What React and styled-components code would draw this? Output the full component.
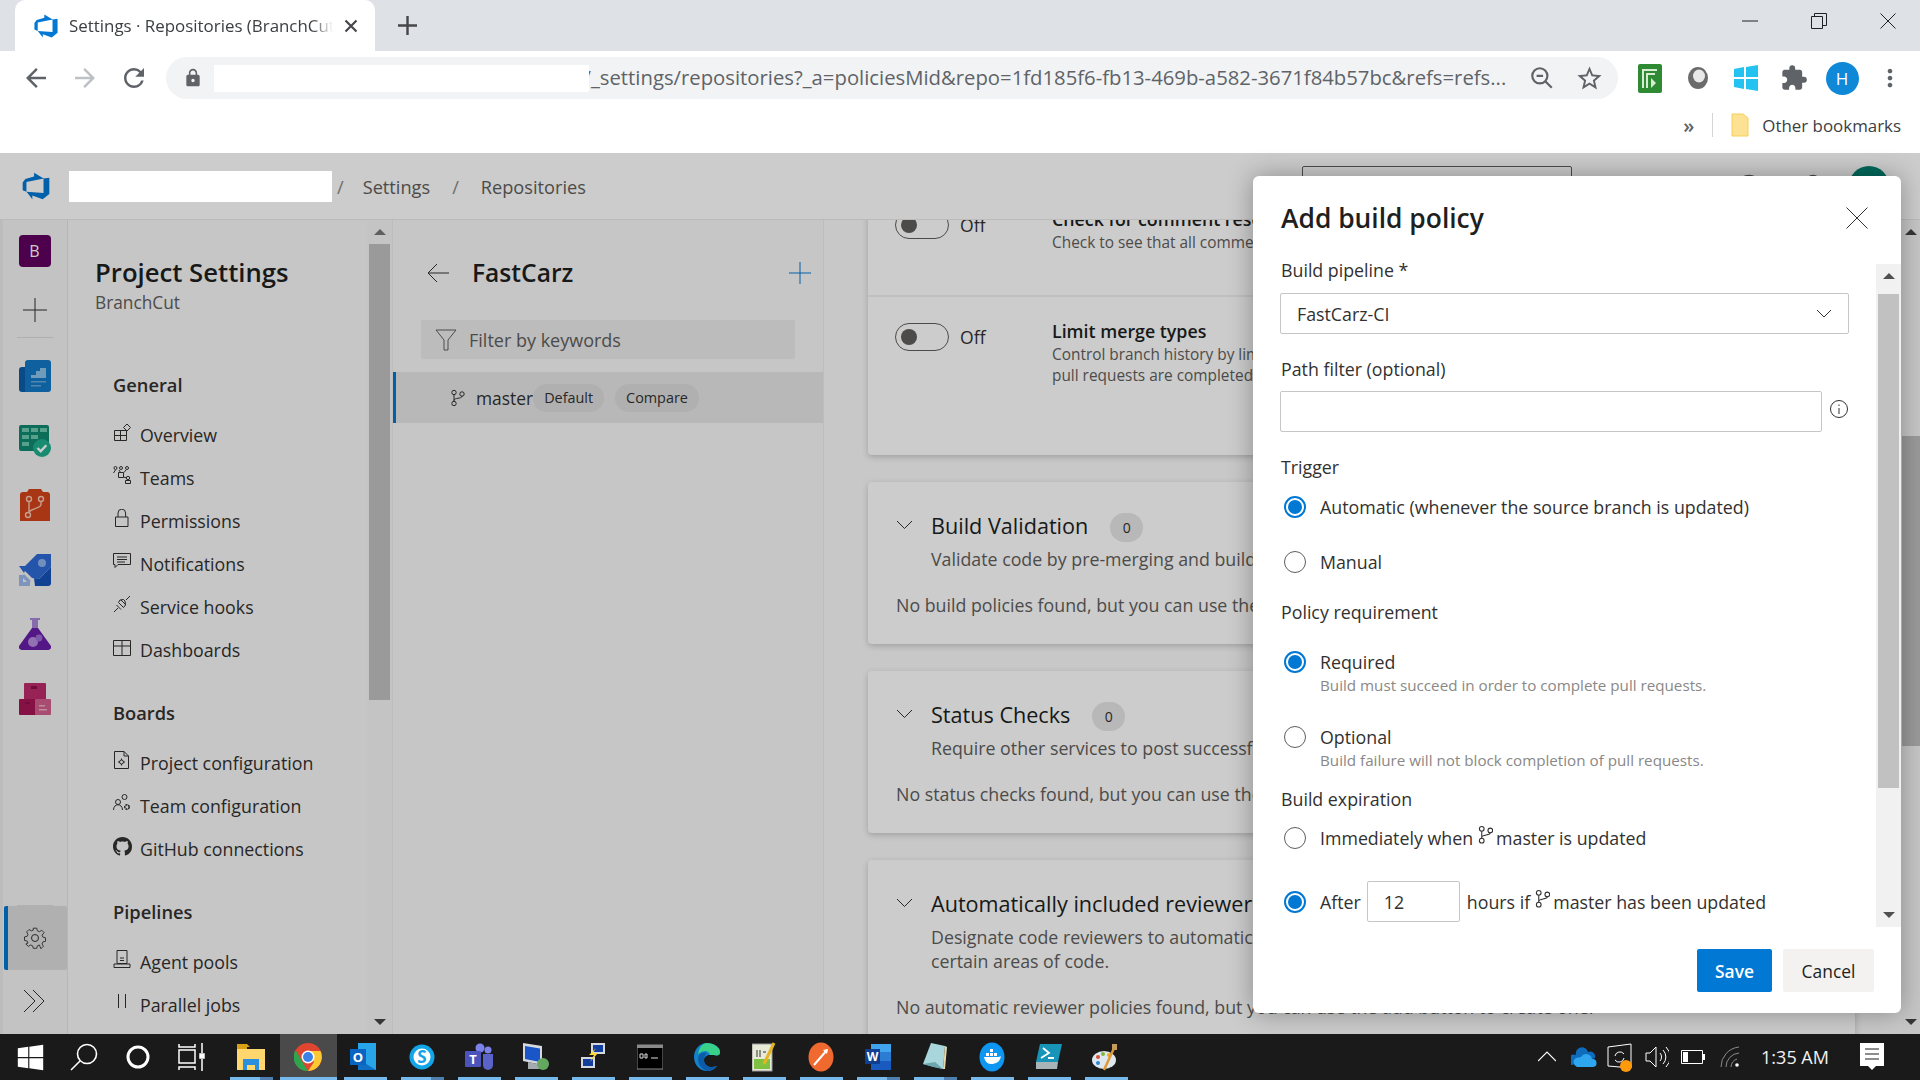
import styled, { createGlobalStyle } from "styled-components";
import { BsGithub } from "react-icons/bs";
import {
  MdArrowBack,
  MdArrowForward,
  MdExtension,
  MdLock,
  MdMoreVert,
  MdRefresh,
  MdStarBorder,
} from "react-icons/md";
import { FaWindows } from "react-icons/fa";

const GlobalStyle = createGlobalStyle`
  html, body { margin: 0; padding: 0; background: #fff; overflow: hidden; }
  * { box-sizing: border-box; }
  body { font-family: "Open Sans", "Liberation Sans", sans-serif; color: #201f1e; }
`;

const Page = styled.div`
  width: 1920px;
  height: 1080px;
  display: flex;
  flex-direction: column;
  overflow: hidden;
`;

/* browser chrome */
const TabStrip = styled.div`
  height: 51px;
  flex: none;
  background: #dee1e6;
  display: flex;
  align-items: center;
  padding-left: 15px;
`;

const Tab = styled.div`
  width: 360px;
  height: 51px;
  background: #fff;
  border-radius: 10px 10px 0 0;
  display: flex;
  align-items: center;
  padding-left: 18px;
  font-size: 16.9px;
  color: #3c4043;
`;

const TabTitle = styled.span`
  width: 264px;
  margin-left: 10px;
  white-space: nowrap;
  overflow: hidden;
  -webkit-mask-image: linear-gradient(to right, #000 92%, transparent);
  mask-image: linear-gradient(to right, #000 92%, transparent);
`;

const TabClose = styled.svg`
  margin-left: 11px;
  flex: none;
`;

const NewTab = styled.svg`
  margin-left: 23px;
`;

const WindowControls = styled.div`
  margin-left: auto;
  display: flex;
  align-items: center;
  height: 41px;
  align-self: flex-start;
  padding-right: 24px;
  gap: 53px;
  color: #202124;
`;

const Toolbar = styled.div`
  height: 59px;
  flex: none;
  background: #fff;
  display: flex;
  align-items: center;
  padding: 0 0 5px 21px;
  color: #5f6368;
`;

const NavButton = styled.div`
  width: 49px;
  display: flex;
  color: ${(p) => (p.$off ? "#bdc1c6" : "#5f6368")};
  font-size: 30px;
`;

const AddressBar = styled.div`
  width: 1452px;
  height: 42px;
  flex: none;
  margin-left: -2px;
  background: #f1f3f4;
  border-radius: 21px;
  display: flex;
  align-items: center;
  padding-left: 17px;
`;

const Blank = styled.div`
  width: ${(p) => p.$w}px;
  height: ${(p) => p.$h}px;
  margin-left: ${(p) => p.$ml}px;
  background: #fff;
  flex: none;
  position: relative;
  z-index: 2;
`;

const UrlText = styled.span`
  width: 923.5px;
  flex: none;
  font-size: 20.3px;
  line-height: 28px;
  margin: -2px 0 0 -5.5px;
  white-space: nowrap;
  overflow: hidden;
  color: #5f6368;
`;

const BarAction = styled.div`
  display: flex;
  font-size: 29px;
  color: #5f6368;
  margin-left: ${(p) => p.$gap}px;
`;

const Extensions = styled.div`
  display: flex;
  align-items: center;
  flex: none;
  margin-left: 8px;
`;

const ExtSlot = styled.div`
  width: 48px;
  display: flex;
  justify-content: center;
  font-size: 28px;
  color: #5f6368;
`;

const Profile = styled.div`
  width: 33px;
  height: 33px;
  border-radius: 50%;
  background: #0f88d8;
  color: #fff;
  display: flex;
  align-items: center;
  justify-content: center;
  font-size: 17px;
`;

const Bookmarks = styled.div`
  height: 43px;
  flex: none;
  background: #fff;
  display: flex;
  align-items: center;
  justify-content: flex-end;
  padding: 0 19px 13px 0;
  font-size: 16.9px;
  color: #3c4043;
`;

const More = styled.span`
  font-size: 20px;
  font-weight: 600;
  color: #5f6368;
`;

const BookmarkSep = styled.div`
  width: 1px;
  height: 24px;
  background: #d5d5d5;
  margin: 0 18px 0 18px;
`;

const BookmarkName = styled.span`
  margin-left: 13px;
  white-space: nowrap;
`;

/* azure devops */
const App = styled.div`
  position: relative;
  flex: 1;
  min-height: 0;
  display: flex;
  flex-direction: column;
  background: #fff;
`;

const Scrim = styled.div`
  position: absolute;
  inset: 0;
  background: rgba(0, 0, 0, 0.2);
  z-index: 1;
`;

const Header = styled.header`
  height: 67px;
  flex: none;
  display: flex;
  align-items: center;
  padding-left: 21px;
  border-bottom: 1px solid #eaeaea;
  background: #fff;
  font-size: 18.2px;
  color: #605e5c;
`;

const Crumb = styled.span`
  margin: 2px 0 0 ${(p) => p.$gap}px;
  color: ${(p) => (p.$sep ? "#8a8886" : "#605e5c")};
`;

const SearchBox = styled.div`
  width: 270px;
  height: 40px;
  margin-left: 716px;
  border: 1px solid #605e5c;
  border-radius: 2px;
`;

const HeadIcon = styled.div`
  width: 64px;
  display: flex;
  justify-content: center;
  color: #605e5c;
  ${SearchBox} + & {
    margin-left: 81px;
  }
`;

const Avatar = styled.div`
  width: 40px;
  height: 40px;
  border-radius: 50%;
  background: #008272;
  margin-left: 4px;
`;

const Body = styled.div`
  flex: 1;
  min-height: 0;
  display: flex;
`;

const Rail = styled.nav`
  width: 68px;
  flex: none;
  background: #f4f4f4;
  border-right: 1px solid #e4e4e4;
  border-left: 3px solid #ececec;
  display: flex;
  flex-direction: column;
  align-items: center;
  padding-top: 15px;
`;

const ProjectTile = styled.div`
  width: 32px;
  height: 32px;
  border-radius: 4px;
  background: #610060;
  color: #fff;
  display: flex;
  align-items: center;
  justify-content: center;
  font-size: 16px;
  margin-left: -1px;
`;

const RailPlus = styled.svg`
  margin-top: 31px;
  margin-left: -1px;
`;

const RailSep = styled.div`
  width: 37px;
  height: 1px;
  background: #dcdcdc;
  flex: none;
  margin-top: ${(p) => p.$mt};
  margin-bottom: ${(p) => p.$mb}px;
`;

const RailItem = styled.div`
  height: 64.5px;
  width: 100%;
  flex: none;
  display: flex;
  align-items: center;
  justify-content: center;
  padding-right: 1px;
`;

const RailActive = styled.div`
  width: 63px;
  height: 64px;
  flex: none;
  background: #dcdcdc;
  border-left: 4px solid #0078d4;
  border-radius: 2px;
  display: flex;
  align-items: center;
  justify-content: center;
  padding-right: 4px;
`;

const RailExpand = styled.div`
  height: 62px;
  margin-bottom: 2px;
  flex: none;
  display: flex;
  align-items: center;
  justify-content: center;
`;

const Sidebar = styled.aside`
  width: 324px;
  flex: none;
  display: flex;
  background: #f8f8f8;
  overflow: hidden;
`;

const SideNav = styled.div`
  flex: 1;
  min-width: 0;
  padding: 37px 0 0 27px;
`;

const SideTitle = styled.h1`
  margin: 0;
  font-size: 25.7px;
  line-height: 32px;
  font-weight: 600;
  color: #201f1e;
`;

const SideProject = styled.div`
  font-size: 17.3px;
  line-height: 26px;
  padding-top: 1px;
  margin-bottom: -1px;
  color: #605e5c;
`;

const NavGroup = styled.section`
  padding-left: 18px;
  margin-top: ${(p) => p.$mt}px;
`;

const NavHeading = styled.div`
  height: 36px;
  line-height: 36px;
  margin-bottom: 11px;
  font-size: 18.3px;
  font-weight: 600;
  color: #323130;
`;

const NavItem = styled.div`
  height: 43px;
  padding-bottom: 2px;
  display: flex;
  align-items: center;
  font-size: 17.8px;
  color: #323130;
  white-space: nowrap;
`;

const NavIcon = styled.span`
  width: 27px;
  flex: none;
  display: flex;
  margin-bottom: 5px;
  color: #323130;
  font-size: 19px;
`;

const Scrollbar = styled.div`
  width: ${(p) => p.$w}px;
  flex: none;
  display: flex;
  flex-direction: column;
  align-items: center;
  background: ${(p) => p.$bg};
  padding-top: ${(p) => p.$pad}px;
  padding-bottom: ${(p) => p.$pad}px;
`;

const ScrollUp = styled.div`
  width: 0;
  height: 0;
  flex: none;
  border: 6px solid transparent;
  border-top: 0;
  border-bottom: 6px solid ${(p) => p.$c};
  margin-bottom: ${(p) => p.$after}px;
`;

const ScrollDown = styled.div`
  width: 0;
  height: 0;
  flex: none;
  border: 6px solid transparent;
  border-bottom: 0;
  border-top: 6px solid ${(p) => p.$c};
  margin-top: auto;
`;

const ScrollThumb = styled.div`
  width: ${(p) => p.$w}px;
  height: ${(p) => p.$h}px;
  flex: none;
  background: #c1c1c1;
  margin-top: ${(p) => p.$mt || 0}px;
`;

const Branches = styled.div`
  width: 432px;
  flex: none;
  background: #f8f8f8;
  border-right: 1px solid #ededed;
  border-left: 1px solid #ededed;
`;

const BranchHead = styled.div`
  height: 100px;
  padding: 6px 11px 0 33px;
  display: flex;
  align-items: center;
`;

const RepoName = styled.h2`
  margin: -2px 0 0 22px;
  font-size: 24.6px;
  font-weight: 600;
  color: #201f1e;
  flex: 1;
`;

const FilterBox = styled.div`
  height: 39px;
  margin: 0 28px;
  background: #ececec;
  border-radius: 2px;
  display: flex;
  align-items: center;
  padding-left: 14px;
  font-size: 18px;
  color: #605e5c;
`;

const FilterText = styled.span`
  margin-left: 12px;
`;

const BranchRow = styled.div`
  height: 51px;
  margin-top: 13px;
  background: #e7e7e7;
  border-left: 3px solid #0078d4;
  display: flex;
  align-items: center;
  padding-left: 53px;
  font-size: 17.4px;
  color: #323130;
`;

const BranchName = styled.span`
  margin-left: 9px;
`;

const Pill = styled.span`
  height: 28px;
  padding: 0 11px;
  margin-left: ${(p) => p.$gap}px;
  border-radius: 14px;
  background: #dcdcdc;
  display: flex;
  align-items: center;
  font-size: 14.4px;
  color: #323130;
`;

const Main = styled.main`
  flex: 1;
  min-width: 0;
  display: flex;
  background: #fafafa;
  overflow: hidden;
`;

const MainContent = styled.div`
  flex: 1;
  min-width: 0;
  margin-top: -37px;
  padding: 0 47px 0 44px;
`;

const Card = styled.section`
  background: #fff;
  border-radius: 4px;
  box-shadow: 0 2px 6px rgba(0, 0, 0, 0.2);
  margin-bottom: 27px;
  overflow: hidden;
`;

const PolicyRow = styled.div`
  height: ${(p) => p.$h}px;
  padding: 24px 0 0 27px;
  display: flex;
  align-items: flex-start;
  & + & {
    padding-top: 22px;
    border-top: 2px solid #f0f0f0;
  }
`;

const ToggleWrap = styled.div`
  width: 157px;
  flex: none;
  display: flex;
  align-items: center;
  margin-top: 4px;
  font-size: 17.6px;
  color: #323130;
`;

const Toggle = styled.div`
  width: 54px;
  height: 28px;
  border: 1px solid #605e5c;
  border-radius: 14px;
  display: flex;
  align-items: center;
  padding-left: 5px;
  margin-right: 11px;
`;

const Knob = styled.div`
  width: 16px;
  height: 16px;
  border-radius: 50%;
  background: #605e5c;
`;

const PolicyTitle = styled.div`
  font-size: 17.8px;
  line-height: 24px;
  font-weight: 600;
  color: #201f1e;
  white-space: nowrap;
`;

const PolicyDesc = styled.div`
  font-size: 15.4px;
  line-height: 21px;
  margin-top: 1px;
  color: #605e5c;
  white-space: nowrap;
`;

const SectionCard = styled(Card)`
  padding: 28px 0 28px 28px;
`;

const SectionHead = styled.div`
  display: flex;
  align-items: center;
  height: 30px;
`;

const Chevron = styled.svg`
  width: 35px;
  flex: none;
`;

const SectionTitle = styled.h3`
  margin: 0;
  font-size: 21.6px;
  font-weight: 400;
  color: #201f1e;
  white-space: nowrap;
`;

const CountPill = styled.span`
  width: 33px;
  height: 29px;
  margin: 5px 0 0 22px;
  border-radius: 15px;
  background: #e6e6e6;
  font-size: 14px;
  display: flex;
  align-items: center;
  justify-content: center;
  color: #323130;
`;

const SectionDesc = styled.div`
  margin: 7px 0 0 35px;
  font-size: 17.8px;
  line-height: 24px;
  color: #605e5c;
  white-space: nowrap;
`;

const EmptyNote = styled.div`
  margin-top: 23px;
  font-size: 17.8px;
  line-height: 22px;
  color: #605e5c;
  white-space: nowrap;
`;

/* dialog */
const Dialog = styled.div`
  position: absolute;
  top: 23px;
  right: 19px;
  width: 648px;
  height: 837px;
  background: #fff;
  border-radius: 6px;
  box-shadow: 0 0 26px rgba(0, 0, 0, 0.32);
  z-index: 2;
  display: flex;
  flex-direction: column;
`;

const DialogHead = styled.div`
  height: 88px;
  flex: none;
  display: flex;
  align-items: flex-start;
  justify-content: space-between;
  padding: 24px 33px 0 28px;
`;

const DialogTitle = styled.h2`
  margin: 0;
  font-size: 26.4px;
  line-height: 36px;
  font-weight: 600;
  color: #201f1e;
`;

const DialogBody = styled.div`
  flex: 1;
  min-height: 0;
  display: flex;
`;

const Form = styled.div`
  flex: 1;
  min-width: 0;
  padding-left: 27px;
  margin-top: -6px;
  font-size: 17.8px;
  color: #323130;
`;

const FieldLabel = styled.div`
  line-height: 24px;
  margin-top: ${(p) => p.$mt || 0}px;
  padding-left: 1px;
`;

const SelectBox = styled.div`
  width: 569px;
  height: 41px;
  margin-top: 11px;
  border: 1px solid #c8c6c4;
  border-radius: 2px;
  display: flex;
  align-items: center;
  justify-content: space-between;
  padding: 0 16px;
`;

const InputRow = styled.div`
  display: flex;
  align-items: center;
  margin-top: 10px;
`;

const TextBox = styled.div`
  width: ${(p) => p.$w}px;
  height: 41px;
  flex: none;
  margin: ${(p) => p.$margin || 0};
  border: 1px solid #c8c6c4;
  border-radius: 2px;
  display: flex;
  align-items: center;
  padding-left: 16px;
`;

const InfoIcon = styled.svg`
  margin: 0 0 5px 8px;
`;

const Choice = styled.div`
  display: flex;
  align-items: center;
  min-height: 30px;
  margin-top: ${(p) => p.$mt}px;
  padding-left: 4px;
  white-space: nowrap;
`;

const Radio = styled.span`
  width: 22px;
  height: 22px;
  flex: none;
  margin-right: 14px;
  border-radius: 50%;
  border: ${(p) => (p.$on ? "2px solid #0078d4" : "1px solid #605e5c")};
  padding: 2px;
  background-clip: content-box;
  background-color: ${(p) => (p.$on ? "#0078d4" : "transparent")};
`;

const ChoiceHint = styled.div`
  margin: -1px 0 1px 40px;
  font-size: 15.2px;
  line-height: 18px;
  color: #8a8886;
  white-space: nowrap;
`;

const InlineBranch = styled.svg`
  margin: 0 3px 6px 5px;
  flex: none;
`;

const DialogFoot = styled.div`
  height: 86px;
  flex: none;
  display: flex;
  justify-content: flex-end;
  gap: 11px;
  padding: 22px 27px 0 0;
`;

const Button = styled.div`
  width: ${(p) => p.$w}px;
  height: 43px;
  border-radius: 2px;
  display: flex;
  align-items: center;
  justify-content: center;
  font-size: 17.4px;
  font-weight: ${(p) => (p.$primary ? 600 : 400)};
  color: ${(p) => (p.$primary ? "#fff" : "#201f1e")};
  background: ${(p) => (p.$primary ? "#0078d4" : "#f3f2f1")};
`;

/* windows taskbar */
const Taskbar = styled.footer`
  height: 46px;
  flex: none;
  background: #1a1a1a;
  display: flex;
  position: relative;
  z-index: 3;
  color: #fff;
`;

const ShellSlot = styled.div`
  width: 54px;
  display: flex;
  align-items: center;
  justify-content: center;
  &:first-child {
    margin-left: 3px;
  }
`;

const AppSlot = styled.div`
  width: 57px;
  height: 46px;
  display: flex;
  align-items: center;
  justify-content: center;
  position: relative;
  background: ${(p) => (p.$active ? "#4a4a4a" : "transparent")};
  &:nth-child(5) {
    margin-left: 3.5px;
  }
`;

const RunMark = styled.span`
  position: absolute;
  left: ${(p) => (p.$active ? 0 : 7)}px;
  right: ${(p) => (p.$active ? 0 : 7)}px;
  bottom: 0;
  height: 3px;
  background: ${(p) =>
    p.$stack
      ? "linear-gradient(to right, #76b9ed 70%, #4f7fae 70%)"
      : "#76b9ed"};
`;

const Tray = styled.div`
  margin-left: auto;
  display: flex;
  align-items: center;
  padding-right: 18px;
`;

const TraySlot = styled.div`
  width: 36.5px;
  display: flex;
  justify-content: center;
`;

const Clock = styled.div`
  width: 94px;
  text-align: center;
  font-size: 18px;
  color: #f0f0f0;
  white-space: nowrap;
`;

const NotifySlot = styled.div`
  width: 60px;
  display: flex;
  justify-content: center;
`;

const Line = ({ size = 18, w = 1, vb = "0 0 18 18", children, ...rest }) => (
  <svg width={size} height={size} viewBox={vb} fill="none" stroke="currentColor" strokeWidth={w} {...rest}>
    {children}
  </svg>
);

const DevOpsLogo = ({ size = 28, color = "#0078d4" }) => (
  <svg width={size} height={size} viewBox="0 0 18 18">
    <path
      fill={color}
      d="M17 4v9.74l-4 3.28-6.2-2.26V17L3.29 12.41l10.23.8V4.44zm-3.41.49L7.85 1v2.29L2.58 4.84 1 6.87v4.61l2.26 1V6.57z"
    />
  </svg>
);

const BranchGlyph = () => (
  <>
    <circle cx="5" cy="3.5" r="2.2" />
    <circle cx="5" cy="14.5" r="2.2" />
    <circle cx="13" cy="5" r="2.2" />
    <path d="M5 5.7v6.6M5 11.5c0-3 8-1.500 8-4.300" />
  </>
);

const BoardsIcon = () => (
  <svg width="32" height="32" viewBox="0 0 32 32">
    <path fill="#0a5ea8" d="M0 10a3 3 0 0 1 3-3h6v25H3a3 3 0 0 1-3-3z" />
    <path fill="#1278c6" d="M6 3a3 3 0 0 1 3-3h20a3 3 0 0 1 3 3v26a3 3 0 0 1-3 3H6z" />
    <path fill="#8cc3ea" d="M12 15h5v-4h4V8h6v10H12z" />
    <path fill="#64a8dc" d="M12 21h15v1.5H12zM12 25h10v1.5H12z" />
  </svg>
);

const OverviewIcon = () => (
  <svg width="32" height="32" viewBox="0 0 32 32">
    <rect width="30" height="26" rx="2" fill="#10896f" />
    <path fill="#6dc8ae" d="M3 3h7v4H3zM12 3h7v4h-7zM21 3h7v4h-7zM3 10h7v4H3zM12 10h7v4h-7zM3 17h7v4H3z" />
    <circle cx="23" cy="23" r="9" fill="#1fae8e" />
    <path d="M18.5 23l3.2 3.2 5.6-6" fill="none" stroke="#fff" strokeWidth="2.4" />
  </svg>
);

const ReposIcon = () => (
  <svg width="32" height="32" viewBox="0 0 32 32">
    <path fill="#d3431a" d="M1 5a3 3 0 0 1 3-2h4l2-3h12l2 3h4a3 3 0 0 1 3 2v27H1z" />
    <g fill="none" stroke="#f6c7b4" strokeWidth="1.4">
      <circle cx="10" cy="10" r="2.5" />
      <circle cx="22" cy="10" r="2.5" />
      <circle cx="9" cy="26" r="2.5" />
      <path d="M10 12.5v11M22 12.5v3c0 4-11 4-12 8" />
    </g>
  </svg>
);

const PipelinesIcon = () => (
  <svg width="32" height="32" viewBox="0 0 32 32">
    <path fill="#2f6bd6" d="M18 0h14v13L20 25l-7-1-7-7v-5z" />
    <path fill="#1652b8" d="M32 13v16a3 3 0 0 1-3 3H16l-1-8 5 1z" />
    <path fill="#2f6bd6" d="M0 12h8l-3 7z" />
    <circle cx="23" cy="9" r="4" fill="#8eb2ec" />
    <path fill="#9db9ec" d="M0 21h4v7h7v4H0zM5 20l7 7-3 2-6-6z" />
  </svg>
);

const TestIcon = () => (
  <svg width="32" height="32" viewBox="0 0 32 32">
    <path fill="#a887d8" d="M11 0h10v2h-2v10H13V2h-2z" />
    <path fill="#6a1fa8" d="M13 10h6l13 18a3 3 0 0 1-3 4H3a3 3 0 0 1-3-4z" />
    <circle cx="14" cy="24" r="5" fill="#b48fe0" />
    <circle cx="20" cy="20" r="3.4" fill="#9f70d4" />
  </svg>
);

const ArtifactsIcon = () => (
  <svg width="32" height="32" viewBox="0 0 32 32">
    <rect x="5" y="0" width="22" height="17" rx="1" fill="#bd2b6c" />
    <rect x="0" y="16" width="17" height="16" rx="1" fill="#a81656" />
    <rect x="16" y="16" width="16" height="16" rx="1" fill="#d4608f" />
    <path fill="#8c1248" d="M12 3h6v3h-6zM6 19h5v2H6z" />
    <path fill="#f0b0c8" d="M20 26h8v1.4h-8zM20 22h6v1.4h-6z" />
  </svg>
);

const navGroups = [
  {
    heading: "General",
    mt: 52,
    items: [
      ["Overview", <Line><path d="M1.5 7.5h12v10h-12zM7.5 7.5v10M1.5 12.5h12" /><path d="M14 1l3.5 3.5L14 8l-3.5-3.5z" /></Line>],
      ["Teams", <Line><circle cx="2.5" cy="2" r="1.5" /><circle cx="8" cy="2" r="1.5" /><circle cx="14" cy="2" r="1.5" /><path d="M.5 7l2-3M6 4l1.500 2.500M13 4l-2 2.500M5.500 6.500h5v5h-5zM10.500 11l3 1" /><circle cx="15" cy="12" r="1.700" /><path d="M12.500 17.500v-3h5v3z" /></Line>],
      ["Permissions", <Line><path d="M2.5 8h12.5v9.5H2.5zM5 8V4a3.8 3.8 0 0 1 7.6 0v4" /></Line>],
      ["Notifications", <Line><path d="M.5 1.500h17v11H5l-3 3v-3H.5zM4 5h10M4 7.500h10M4 10h8" /></Line>],
      ["Service hooks", <Line><path d="M1 17l4-4M17 1l-4 4M5.500 7.500l5 5 2-2.500-.5-4-1.500-1.500-3.500.5zM3.500 10l4.500 4.500M8 5l5 5" /></Line>],
      ["Dashboards", <Line><path d="M.5 2.500h17v15H.5zM.5 8h17M9 2.500V17.500" /></Line>],
    ],
  },
  {
    heading: "Boards",
    mt: 23,
    items: [
      ["Project configuration", <Line><path d="M1.5.5h9.5l4.5 4.500v12.500H1.500zM11 .5v4.500h4.500" /><circle cx="8.500" cy="11" r="2" /><path d="M8.500 7.500v1.500M8.500 13v1.500M5 11h1.500M10.500 11H12" /></Line>],
      ["Team configuration", <Line><circle cx="11.500" cy="3" r="2.500" /><circle cx="5" cy="8" r="2.500" /><path d="M.5 16c0-7 9-7 9 0" /><circle cx="14" cy="13" r="2.200" strokeDasharray="2 .6" strokeWidth="1.500" /></Line>],
      ["GitHub connections", <BsGithub />],
    ],
  },
  {
    heading: "Pipelines",
    mt: 23,
    items: [
      ["Agent pools", <Line><path d="M4 .5h10v13H4zM1 17.500h16V14H1zM7 8h4M7 10.500h4" /></Line>],
      ["Parallel jobs", <Line><path d="M5.500 1v14M12.500 1v14" /></Line>],
    ],
  },
];

const taskApps = [
  { key: "explorer", stack: true, icon: (
    <svg width="28" height="26" viewBox="0 0 28 26">
      <path fill="#d9a015" d="M0 0h10l3 3h-3v3H0z" />
      <path fill="#ffd76e" d="M0 5h28v21H0z" />
      <path fill="#2a8fdc" d="M6 15h16v11h-4v-5h-8v5H6z" />
    </svg>
  ) },
  { key: "chrome", active: true, icon: (
    <svg width="28" height="28" viewBox="0 0 28 28">
      <circle cx="14" cy="14" r="14" fill="#e0452f" />
      <path fill="#2fa44f" d="M14 28A14 14 0 0 1 1.500 7l7 12z" />
      <path fill="#fcc934" d="M14 28a14 14 0 0 0 12.500-20L14 8l6 11z" />
      <circle cx="14" cy="14" r="6.500" fill="#fff" />
      <circle cx="14" cy="14" r="5" fill="#3b82e8" />
    </svg>
  ) },
  { key: "outlook", icon: (
    <svg width="28" height="28" viewBox="0 0 28 28" style={{ marginRight: 3 }}>
      <rect x="8" y="0" width="18" height="27" fill="#27a5e8" />
      <path fill="#0f6fc4" d="M8 16l18 11H8z" />
      <rect y="6" width="16" height="16" fill="#0a65c2" />
      <text x="8" y="19" fontSize="13" fontWeight="700" fill="#fff" textAnchor="middle">O</text>
    </svg>
  ) },
  { key: "skype", stack: true, icon: (
    <svg width="26" height="26" viewBox="0 0 26 26">
      <circle cx="13" cy="13" r="12.500" fill="#12a6e8" />
      <circle cx="13" cy="13" r="8.500" fill="#fff" />
      <text x="13" y="19" fontSize="17" fontWeight="700" fill="#12a6e8" textAnchor="middle">S</text>
    </svg>
  ) },
  { key: "teams", icon: (
    <svg width="28" height="28" viewBox="0 0 28 28">
      <circle cx="23" cy="7" r="3.500" fill="#7b83eb" />
      <circle cx="15" cy="5" r="4.500" fill="#7b83eb" />
      <path fill="#5b62c8" d="M18 11h10v11a4 4 0 0 1-10 0z" />
      <rect x="0" y="8" width="16" height="16" rx="1" fill="#4b53bc" />
      <text x="8" y="21" fontSize="13" fontWeight="700" fill="#fff" textAnchor="middle">T</text>
    </svg>
  ) },
  { key: "remote", icon: (
    <svg width="28" height="28" viewBox="0 0 28 28">
      <path fill="#d5d9dd" d="M1 0l19 3v19L1 18z" />
      <path fill="#1b56c8" d="M3 3l15 2.500V19L3 16z" />
      <path fill="#a4aaaf" d="M6 19l14 3v4H6z" />
      <circle cx="21" cy="21" r="6" fill="#63a85e" />
    </svg>
  ) },
  { key: "network", icon: (
    <svg width="26" height="28" viewBox="0 0 26 28">
      <rect x="11" y="0" width="14" height="11" fill="#d5d9dd" />
      <rect x="13" y="2" width="10" height="7" fill="#123e9e" />
      <rect x="1" y="14" width="14" height="11" fill="#d5d9dd" />
      <rect x="3" y="16" width="10" height="7" fill="#123e9e" />
      <path fill="#ffd83a" d="M16 5l-7 7h5l-4 7 8-9h-5z" />
    </svg>
  ) },
  { key: "cmd", icon: (
    <svg width="26" height="26" viewBox="0 0 26 26">
      <rect y="1" width="26" height="24" fill="#000" stroke="#8a8a8a" />
      <rect y="1" width="26" height="3" fill="#8a8a8a" />
      <path d="M3 10h3v4H3zM8 10h2v4H8zM14 14h7" stroke="#ddd" fill="none" />
    </svg>
  ) },
  { key: "edge", icon: (
    <svg width="26" height="28" viewBox="0 0 26 28">
      <path fill="#1481c9" d="M13 0C5 0 0 7 0 14c0 8 6 14 13 14 4 0 8-2 10-5-8 3-13-1-13-6 0-3 3-5 6-5 6 0 10 2 10-3C26 4 20 0 13 0z" />
      <path fill="#39d08a" d="M13 0c6 0 13 4 13 9 0 5-4 3-10 3-1-5-7-5-12-1C5 5 8 0 13 0z" />
      <path fill="#0b5ba8" d="M5 12c3-3 6-3 8-2-2 2-3 4-3 7 0 5 5 9 13 6-2 3-6 5-10 5-6-2-11-9-8-16z" />
    </svg>
  ) },
  { key: "notepadpp", icon: (
    <svg width="24" height="30" viewBox="0 0 24 30">
      <rect x="0" y="2" width="20" height="27" fill="#e8ead8" stroke="#999" />
      <rect x="2" y="17" width="16" height="10" fill="#7fc241" />
      <path stroke="#333" d="M5 8v7M8 8v7M11 10h3" fill="none" />
      <path stroke="#e6b422" strokeWidth="3" d="M22 1L12 22" />
    </svg>
  ) },
  { key: "postman", icon: (
    <svg width="26" height="30" viewBox="0 0 26 30">
      <ellipse cx="13" cy="15" rx="12.500" ry="14.500" fill="#f0692f" />
      <path d="M6 23L19 8" stroke="#fff" strokeWidth="2" />
      <path d="M15 8l5-1-1 5z" fill="#fff" />
    </svg>
  ) },
  { key: "word", stack: true, icon: (
    <svg width="26" height="26" viewBox="0 0 26 26">
      <rect x="6" y="0" width="20" height="8" fill="#41a5ee" />
      <rect x="6" y="8" width="20" height="9" fill="#2b7cd3" />
      <rect x="6" y="17" width="20" height="9" fill="#185abd" />
      <rect y="5" width="15" height="15" fill="#103f91" />
      <text x="7.500" y="17" fontSize="12" fontWeight="700" fill="#fff" textAnchor="middle">W</text>
    </svg>
  ) },
  { key: "notepad", stack: true, icon: (
    <svg width="26" height="28" viewBox="0 0 26 28">
      <path fill="#a9d6dc" d="M1 21L9 0l14 3-2 23z" />
      <path fill="#6da6ae" d="M1 21l10 3 10 2-8-7z" />
      <path fill="#e9d8a8" d="M21 26l2-23 2 1-2 22z" />
    </svg>
  ) },
  { key: "docker", icon: (
    <svg width="26" height="30" viewBox="0 0 26 30">
      <ellipse cx="13" cy="15" rx="12.500" ry="14.500" fill="#0d96f2" />
      <path fill="#fff" d="M5 15h14c2 0 3-1 3-1-1 6-5 8-10 8-4 0-6-3-7-7zM7 11h3v3H7zM11 11h3v3h-3zM15 11h3v3h-3zM11 7h3v3h-3z" />
    </svg>
  ) },
  { key: "powershell", icon: (
    <svg width="26" height="26" viewBox="0 0 26 26">
      <path fill="#1894b8" d="M4 0h22l-4 18H0z" />
      <path stroke="#fff" strokeWidth="1.800" fill="none" d="M7 4l6 5-8 5M12 14h6" />
      <path fill="#a8b4b8" d="M0 18h22l-1 7H0z" />
    </svg>
  ) },
  { key: "paint", icon: (
    <svg width="28" height="28" viewBox="0 0 28 28">
      <ellipse cx="12" cy="17" rx="12" ry="9" fill="#dfe8ee" />
      <circle cx="6" cy="14" r="2" fill="#d94b3a" />
      <circle cx="11" cy="11" r="2" fill="#7dba3c" />
      <circle cx="17" cy="12" r="2" fill="#f2a52b" />
      <circle cx="6" cy="20" r="2" fill="#2e86d4" />
      <path stroke="#e09a35" strokeWidth="2.500" d="M23 3L12 27" />
      <path fill="#c89a5a" d="M20 1h5v6h-5z" />
    </svg>
  ) },
];

const branchMark = (
  <InlineBranch width="15" height="20" viewBox="1.500 0 14 18.500" fill="none" stroke="#323130">
    <BranchGlyph />
  </InlineBranch>
);

const sectionChevron = (
  <Chevron height="10" viewBox="0 0 35 10">
    <path d="M1 1l7.500 7.500L16 1" fill="none" stroke="#323130" />
  </Chevron>
);

export default function Screen() {
  return (
    <Page>
      <GlobalStyle />

      <TabStrip>
        <Tab>
          <DevOpsLogo size={26} />
          <TabTitle>Settings · Repositories (BranchCut</TabTitle>
          <TabClose width="14" height="14" viewBox="0 0 14 14">
            <path d="M1.500 1.500l11 11M12.500 1.500l-11 11" stroke="#45474a" strokeWidth="2.200" />
          </TabClose>
        </Tab>
        <NewTab width="19" height="19" viewBox="0 0 19 19">
          <path d="M9.500 0v19M0 9.500h19" stroke="#45474a" strokeWidth="2.400" />
        </NewTab>
        <WindowControls>
          <svg width="16" height="16" viewBox="0 0 16 16"><path d="M0 8h16" stroke="currentColor" /></svg>
          <svg width="16" height="16" viewBox="0 0 16 16" fill="none" stroke="currentColor"><path d="M.5 3.500h11v12H.5zM3.500 3.500V.5h12v12h-4" /></svg>
          <svg width="16" height="16" viewBox="0 0 16 16"><path d="M.5.5l15 15M15.500.5l-15 15" stroke="currentColor" /></svg>
        </WindowControls>
      </TabStrip>

      <Toolbar>
        <NavButton><MdArrowBack /></NavButton>
        <NavButton $off><MdArrowForward /></NavButton>
        <NavButton><MdRefresh /></NavButton>
        <AddressBar>
          <MdLock size={20} />
          <Blank $w={375} $h={27} $ml={11} />
          <UrlText>/_settings/repositories?_a=policiesMid&amp;repo=1fd185f6-fb13-469b-a582-3671f84b57bc&amp;refs=refs...</UrlText>
          <BarAction $gap={22}>
            <Line size={26} w={2} vb="0 0 24 24"><circle cx="10" cy="10" r="7" /><path d="M15 15l6 6M7 10h6" /></Line>
          </BarAction>
          <BarAction $gap={20}><MdStarBorder /></BarAction>
        </AddressBar>
        <Extensions>
          <ExtSlot>
            <svg width="24" height="29" viewBox="0 0 24 29">
              <rect width="24" height="29" rx="2" fill="#2e8b34" />
              <path d="M5 24V6h14M9 24V10h8" fill="none" stroke="#d7ecd0" strokeWidth="2" />
              <path d="M13 14l5 5-5 5z" fill="#d7ecd0" />
            </svg>
          </ExtSlot>
          <ExtSlot>
            <svg width="24" height="26" viewBox="0 0 24 26">
              <ellipse cx="12" cy="13" rx="10" ry="11" fill="#6b6b6b" />
              <ellipse cx="13" cy="11" rx="6" ry="6.500" fill="#e8e8e8" />
            </svg>
          </ExtSlot>
          <ExtSlot>
            <svg width="24" height="26" viewBox="0 0 24 26">
              <path fill="#23c2f0" d="M0 4l10-2v10H0zM12 2l12-2v12H12zM0 14h10v10L0 22zM12 14h12v12l-12-2z" />
            </svg>
          </ExtSlot>
          <ExtSlot><MdExtension /></ExtSlot>
          <ExtSlot><Profile>H</Profile></ExtSlot>
          <ExtSlot><MdMoreVert /></ExtSlot>
        </Extensions>
      </Toolbar>

      <Bookmarks>
        <More>»</More>
        <BookmarkSep />
        <svg width="18" height="24" viewBox="0 0 18 24">
          <path d="M1 1h11l5 4v18H1z" fill="#fde293" stroke="#f6cf57" />
        </svg>
        <BookmarkName>Other bookmarks</BookmarkName>
      </Bookmarks>

      <App>
        <Scrim />
        <Header>
          <DevOpsLogo size={30} />
          <Blank $w={263} $h={31} $ml={18} />
          <Crumb $sep $gap={5}>/</Crumb>
          <Crumb $gap={19}>Settings</Crumb>
          <Crumb $sep $gap={22}>/</Crumb>
          <Crumb $gap={22}>Repositories</Crumb>
          <SearchBox />
          <HeadIcon><Line size={24}><path d="M2 4h14M2 9h14M2 14h14" /></Line></HeadIcon>
          <HeadIcon><Line size={24}><circle cx="9" cy="9" r="8" /></Line></HeadIcon>
          <HeadIcon><Line size={24}><circle cx="9" cy="6" r="5" /><path d="M1 18c0-8 16-8 16 0" /></Line></HeadIcon>
          <Avatar />
        </Header>

        <Body>
          <Rail>
            <ProjectTile>B</ProjectTile>
            <RailPlus width="24" height="24" viewBox="0 0 24 24">
              <path d="M12 0v24M0 12h24" stroke="#323130" />
            </RailPlus>
            <RailSep $mt="15px" $mb={6} />
            <RailItem><BoardsIcon /></RailItem>
            <RailItem><OverviewIcon /></RailItem>
            <RailItem><ReposIcon /></RailItem>
            <RailItem><PipelinesIcon /></RailItem>
            <RailItem><TestIcon /></RailItem>
            <RailItem><ArtifactsIcon /></RailItem>
            <RailSep $mt="auto" $mb={0} />
            <RailActive>
              <Line size={24} vb="0 0 24 24" style={{ color: "#323130" }}>
                <circle cx="12" cy="12" r="3.500" />
                <path d="M10 1h4l.7 3 2.300 1 2.700-1.600 2.800 2.800L20 8.900l1 2.300 3 .8v4l-3 .7-1 2.300 1.600 2.700-2.800 2.800L17 20.200l-2.300 1-.7 2.800h-4l-.7-2.800-2.300-1-2.700 1.600-2.800-2.800L4 18l-1-2.300-3-.7v-4l3-.7 1-2.300-1.600-2.700 2.800-2.800L7.900 4.100l2.100-.9z" transform="translate(1.500 1.300) scale(.875)" />
              </Line>
            </RailActive>
            <RailExpand>
              <Line size={24} vb="0 0 24 24" style={{ color: "#323130" }}>
                <path d="M1 1l11 11L1 23M10 1l11 11-11 11" />
              </Line>
            </RailExpand>
          </Rail>

          <Sidebar>
            <SideNav>
              <SideTitle>Project Settings</SideTitle>
              <SideProject>BranchCut</SideProject>
              {navGroups.map((group) => (
                <NavGroup key={group.heading} $mt={group.mt}>
                  <NavHeading>{group.heading}</NavHeading>
                  {group.items.map(([label, icon]) => (
                    <NavItem key={label}>
                      <NavIcon>{icon}</NavIcon>
                      {label}
                    </NavItem>
                  ))}
                </NavGroup>
              ))}
            </SideNav>
            <Scrollbar $w={25} $bg="#f6f6f6" $pad={9}>
              <ScrollUp $c="#777" $after={9} />
              <ScrollThumb $w={21} $h={456} />
              <ScrollDown $c="#444" />
            </Scrollbar>
          </Sidebar>

          <Branches>
            <BranchHead>
              <Line size={24} vb="0 0 24 24" style={{ color: "#323130" }}>
                <path d="M23 12H2M11 3l-9 9 9 9" />
              </Line>
              <RepoName>FastCarz</RepoName>
              <Line size={24} vb="0 0 24 24" style={{ color: "#0078d4" }}>
                <path d="M12 1v22M1 12h22" />
              </Line>
            </BranchHead>
            <FilterBox>
              <Line size={22} vb="0 0 22 22"><path d="M1 1h20l-8 10v10h-4V11z" /></Line>
              <FilterText>Filter by keywords</FilterText>
            </FilterBox>
            <BranchRow>
              <Line size={18} vb="0 0 18 18"><BranchGlyph /></Line>
              <BranchName>master</BranchName>
              <Pill $gap={0}>Default</Pill>
              <Pill $gap={11}>Compare</Pill>
            </BranchRow>
          </Branches>

          <Main>
            <MainContent>
              <Card>
                <PolicyRow $h={112}>
                  <ToggleWrap><Toggle><Knob /></Toggle>Off</ToggleWrap>
                  <div>
                    <PolicyTitle>Check for comment resolution</PolicyTitle>
                    <PolicyDesc>Check to see that all comments have been resolved on pull requests.</PolicyDesc>
                  </div>
                </PolicyRow>
                <PolicyRow $h={160}>
                  <ToggleWrap><Toggle><Knob /></Toggle>Off</ToggleWrap>
                  <div>
                    <PolicyTitle>Limit merge types</PolicyTitle>
                    <PolicyDesc>
                      Control branch history by limiting the available types of merge when
                      <br />
                      pull requests are completed.
                    </PolicyDesc>
                  </div>
                </PolicyRow>
              </Card>

              <SectionCard>
                <SectionHead>
                  {sectionChevron}
                  <SectionTitle>Build Validation</SectionTitle>
                  <CountPill>0</CountPill>
                </SectionHead>
                <SectionDesc>Validate code by pre-merging and building pull request changes.</SectionDesc>
                <EmptyNote>No build policies found, but you can use the add button to create one.</EmptyNote>
              </SectionCard>

              <SectionCard>
                <SectionHead>
                  {sectionChevron}
                  <SectionTitle>Status Checks</SectionTitle>
                  <CountPill>0</CountPill>
                </SectionHead>
                <SectionDesc>Require other services to post successful status to complete pull requests.</SectionDesc>
                <EmptyNote>No status checks found, but you can use the add button to create one.</EmptyNote>
              </SectionCard>

              <SectionCard>
                <SectionHead>
                  {sectionChevron}
                  <SectionTitle>Automatically included reviewers</SectionTitle>
                </SectionHead>
                <SectionDesc>
                  Designate code reviewers to automatically include when pull requests change
                  <br />
                  certain areas of code.
                </SectionDesc>
                <EmptyNote>No automatic reviewer policies found, but you can use the add button to create one.</EmptyNote>
              </SectionCard>
            </MainContent>
            <Scrollbar $w={18} $bg="#f8f8f8" $pad={9}>
              <ScrollUp $c="#444" />
              <ScrollThumb $w={18} $h={310} $mt={201} />
              <ScrollDown $c="#444" />
            </Scrollbar>
          </Main>
        </Body>

        <Dialog>
          <DialogHead>
            <DialogTitle>Add build policy</DialogTitle>
            <Line size={22} vb="0 0 22 22" style={{ marginTop: 7, color: "#323130" }}>
              <path d="M.5.5l21 21M21.500.5l-21 21" />
            </Line>
          </DialogHead>

          <DialogBody>
            <Form>
              <FieldLabel>Build pipeline *</FieldLabel>
              <SelectBox>
                FastCarz-CI
                <Line size={16} vb="0 0 16 16"><path d="M1 4l7 7 7-7" /></Line>
              </SelectBox>

              <FieldLabel $mt={23}>Path filter (optional)</FieldLabel>
              <InputRow>
                <TextBox $w={542} />
                <InfoIcon width="18" height="18" viewBox="0 0 18 18" fill="none" stroke="#323130">
                  <circle cx="9" cy="9" r="8.500" />
                  <path d="M9 8v6M9 4.500v1.500" />
                </InfoIcon>
              </InputRow>

              <FieldLabel $mt={23}>Trigger</FieldLabel>
              <Choice $mt={13}><Radio $on />Automatic (whenever the source branch is updated)</Choice>
              <Choice $mt={25}><Radio />Manual</Choice>

              <FieldLabel $mt={23}>Policy requirement</FieldLabel>
              <Choice $mt={23}><Radio $on />Required</Choice>
              <ChoiceHint>Build must succeed in order to complete pull requests.</ChoiceHint>
              <Choice $mt={28}><Radio />Optional</Choice>
              <ChoiceHint>Build failure will not block completion of pull requests.</ChoiceHint>

              <FieldLabel $mt={18}>Build expiration</FieldLabel>
              <Choice $mt={12}>
                <Radio />Immediately when
                {branchMark}
                master is updated
              </Choice>
              <Choice $mt={28}>
                <Radio $on />After
                <TextBox $w={93} $margin="0 7px 0 6px">12</TextBox>
                hours if
                {branchMark}
                master has been updated
              </Choice>
            </Form>
            <Scrollbar $w={25} $bg="#f1f1f1" $pad={9}>
              <ScrollUp $c="#505050" $after={15} />
              <ScrollThumb $w={21} $h={494} />
              <ScrollDown $c="#505050" />
            </Scrollbar>
          </DialogBody>

          <DialogFoot>
            <Button $primary $w={75}>Save</Button>
            <Button $w={91}>Cancel</Button>
          </DialogFoot>
        </Dialog>
      </App>

      <Taskbar>
        <ShellSlot><FaWindows size={29} /></ShellSlot>
        <ShellSlot>
          <Line size={28} w={1.600} vb="0 0 28 28"><circle cx="17" cy="11" r="9.500" /><path d="M10 18L1 27" /></Line>
        </ShellSlot>
        <ShellSlot>
          <svg width="24" height="24" viewBox="0 0 24 24"><circle cx="12" cy="12" r="10" fill="none" stroke="#fff" strokeWidth="3" /></svg>
        </ShellSlot>
        <ShellSlot>
          <Line size={28} w={1.500} vb="0 0 28 28"><path d="M1 1v3h16V1M1 7h16v13H1zM1 27v-3h16v3M24 0v10M24 16v12" /><rect x="22" y="11" width="4" height="4" fill="#fff" /></Line>
        </ShellSlot>
        {taskApps.map((app) => (
          <AppSlot key={app.key} $active={app.active}>
            {app.icon}
            <RunMark $active={app.active} $stack={app.stack} />
          </AppSlot>
        ))}
        <Tray>
          <TraySlot>
            <Line size={18} w={1.200} vb="0 0 18 18"><path d="M0 13l9-9 9 9" /></Line>
          </TraySlot>
          <TraySlot>
            <svg width="26" height="20" viewBox="0 0 26 20">
              <path fill="#0f6cbd" d="M5 8a6 6 0 0 1 12-3 5 5 0 0 1 7 6L10 16 0 18a5 5 0 0 1 5-10z" />
              <path fill="#2ea6ef" d="M6 20a5 5 0 0 1-1-9l5-1a6 6 0 0 1 11 2 4 4 0 0 1 1 8z" />
            </svg>
          </TraySlot>
          <TraySlot>
            <svg width="26" height="30" viewBox="0 0 26 30">
              <path d="M1 5l23-3v24l-23-2z" fill="none" stroke="#fff" />
              <path d="M8 14a5 5 0 0 1 9-2M17 16a5 5 0 0 1-9 2" fill="none" stroke="#fff" />
              <circle cx="19" cy="24" r="6" fill="#ff9a0a" />
            </svg>
          </TraySlot>
          <TraySlot>
            <Line size={24} w={1} vb="0 0 24 24"><path d="M1 8h4l6-6v20l-6-6H1zM15 8a6 6 0 0 1 0 8M18 5a10 10 0 0 1 0 14M21 2a14 14 0 0 1 0 20" /></Line>
          </TraySlot>
          <TraySlot>
            <svg width="24" height="14" viewBox="0 0 24 14">
              <path d="M.5.5h21v13H.5z" fill="none" stroke="#fff" />
              <rect x="2" y="2" width="5" height="10" fill="#fff" />
              <rect x="22" y="4" width="2" height="6" fill="#fff" />
            </svg>
          </TraySlot>
          <TraySlot>
            <svg width="20" height="22" viewBox="0 0 20 22" fill="none" stroke="#8c8c8c">
              <path d="M1 21A20 20 0 0 1 19 1M6 21A14 14 0 0 1 19 7M11 21a9 9 0 0 1 6-8" />
              <circle cx="17" cy="19" r="1.800" fill="#fff" stroke="none" />
            </svg>
          </TraySlot>
          <Clock>1:35 AM</Clock>
          <NotifySlot>
            <svg width="24" height="28" viewBox="0 0 24 28">
              <path fill="#fff" d="M0 0h24v23h-8l-4 4-4-4H0z" />
              <path stroke="#1a1a1a" d="M5 6h14M5 11h14M5 16h14" />
            </svg>
          </NotifySlot>
        </Tray>
      </Taskbar>
    </Page>
  );
}
